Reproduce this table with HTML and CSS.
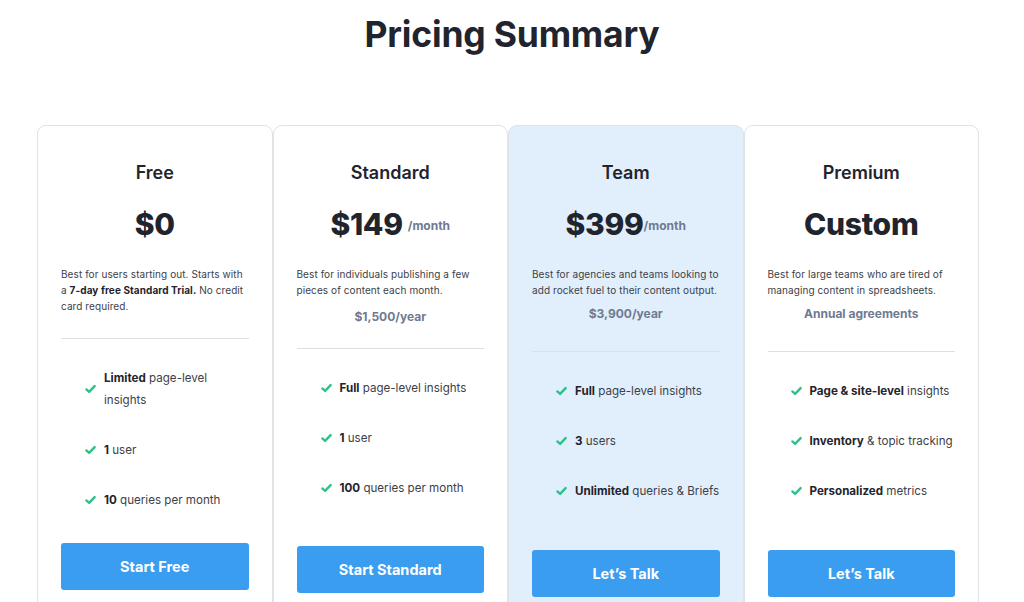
FILE: index.html
```html
<!DOCTYPE html>
<html lang="en">
<head>
<meta charset="utf-8">
<title>Pricing Summary</title>
<link rel="stylesheet" href="styles.css">
</head>
<body>
<main class="page">
  <h1 class="title">Pricing Summary</h1>
  <section class="plans">
    <article class="card card--free">
      <h2 class="plan-name">Free</h2>
      <div class="price"><span class="amount">$0</span></div>
      <p class="desc">Best for users starting out. Starts with a <b>7-day free Standard Trial.</b> No credit card required.</p>
      <hr class="divider">
      <ul class="features">
        <li><svg class="check" viewBox="0 0 12 10"><path d="M1.5 5.5 L4.5 8.2 L10.5 1.8"/></svg><span><b>Limited</b> page-level insights</span></li>
        <li><svg class="check" viewBox="0 0 12 10"><path d="M1.5 5.5 L4.5 8.2 L10.5 1.8"/></svg><span><b>1</b> user</span></li>
        <li><svg class="check" viewBox="0 0 12 10"><path d="M1.5 5.5 L4.5 8.2 L10.5 1.8"/></svg><span><b>10</b> queries per month</span></li>
      </ul>
      <a class="btn" href="#">Start Free</a>
    </article>
    <article class="card card--standard">
      <h2 class="plan-name">Standard</h2>
      <div class="price"><span class="amount">$149</span><span class="per per--spaced">/month</span></div>
      <p class="desc">Best for individuals publishing a few pieces of content each month.</p>
      <p class="yearly">$1,500/year</p>
      <hr class="divider">
      <ul class="features">
        <li><svg class="check" viewBox="0 0 12 10"><path d="M1.5 5.5 L4.5 8.2 L10.5 1.8"/></svg><span><b>Full</b> page-level insights</span></li>
        <li><svg class="check" viewBox="0 0 12 10"><path d="M1.5 5.5 L4.5 8.2 L10.5 1.8"/></svg><span><b>1</b> user</span></li>
        <li><svg class="check" viewBox="0 0 12 10"><path d="M1.5 5.5 L4.5 8.2 L10.5 1.8"/></svg><span><b>100</b> queries per month</span></li>
      </ul>
      <a class="btn" href="#">Start Standard</a>
    </article>
    <article class="card card--team">
      <h2 class="plan-name">Team</h2>
      <div class="price"><span class="amount">$399</span><span class="per">/month</span></div>
      <p class="desc">Best for agencies and teams looking to add rocket fuel to their content output.</p>
      <p class="yearly">$3,900/year</p>
      <hr class="divider">
      <ul class="features">
        <li><svg class="check" viewBox="0 0 12 10"><path d="M1.5 5.5 L4.5 8.2 L10.5 1.8"/></svg><span><b>Full</b> page-level insights</span></li>
        <li><svg class="check" viewBox="0 0 12 10"><path d="M1.5 5.5 L4.5 8.2 L10.5 1.8"/></svg><span><b>3</b> users</span></li>
        <li><svg class="check" viewBox="0 0 12 10"><path d="M1.5 5.5 L4.5 8.2 L10.5 1.8"/></svg><span><b>Unlimited</b> queries &amp; Briefs</span></li>
      </ul>
      <a class="btn" href="#">Let’s Talk</a>
    </article>
    <article class="card card--premium">
      <h2 class="plan-name">Premium</h2>
      <div class="price"><span class="amount">Custom</span></div>
      <p class="desc">Best for large teams who are tired of managing content in spreadsheets.</p>
      <p class="yearly">Annual agreements</p>
      <hr class="divider">
      <ul class="features">
        <li><svg class="check" viewBox="0 0 12 10"><path d="M1.5 5.5 L4.5 8.2 L10.5 1.8"/></svg><span><b>Page &amp; site-level</b> insights</span></li>
        <li><svg class="check" viewBox="0 0 12 10"><path d="M1.5 5.5 L4.5 8.2 L10.5 1.8"/></svg><span><b>Inventory</b> &amp; topic tracking</span></li>
        <li><svg class="check" viewBox="0 0 12 10"><path d="M1.5 5.5 L4.5 8.2 L10.5 1.8"/></svg><span><b>Personalized</b> metrics</span></li>
      </ul>
      <a class="btn" href="#">Let’s Talk</a>
    </article>
  </section>
</main>
</body>
</html>
```
FILE: styles.css
```css
* { box-sizing: border-box; }
html, body { margin: 0; padding: 0; background: #ffffff; }
body {
  font-family: Inter, "Liberation Sans", sans-serif;
  color: #1f242d;
  overflow: hidden;
  height: 602px;
}
.page { padding-top: 14px; }
.title {
  margin: 0;
  text-align: center;
  font-size: 35.5px;
  line-height: 42px;
  font-weight: 700;
  letter-spacing: -0.2px;
  color: #1f242d;
}
.plans {
  display: grid;
  grid-template-columns: repeat(4, 235.5px);
  margin: 69px 0 0 37px;
}
.card {
  border: 1px solid #dfe3e8;
  border-radius: 9px;
  background: #fff;
  padding: 35px 23px 40px;
  height: 520px;
  display: flex;
  flex-direction: column;
}
.card--team { background: #e1effd; }
.plan-name {
  margin: 0;
  text-align: center;
  font-size: 18px;
  line-height: 24px;
  font-weight: 600;
}
.price {
  margin-top: 19px;
  display: flex;
  justify-content: center;
  align-items: center;
  height: 40px;
}
.amount {
  font-size: 30px;
  font-weight: 800;
  letter-spacing: -0.3px;
}
.per {
  font-size: 12px;
  font-weight: 700;
  color: #6f7a90;
  margin-top: 2px;
}
.per--spaced { margin-left: 5px; }
.desc {
  margin: 22px 0 0;
  font-size: 10px;
  letter-spacing: 0.08px;
  line-height: 16px;
  color: #3c4149;
}
.desc b { color: #1f242d; }
.yearly {
  margin: 10px 0 0;
  text-align: center;
  font-size: 12px;
  line-height: 18px;
  font-weight: 700;
  color: #6f7a90;
}
.card--team .yearly, .card--premium .yearly { margin-top: 7px; }
.divider {
  margin: 23px 0 0;
  border: 0;
  border-top: 1px solid #dcdfe3;
  height: 0;
}
.card--free .divider { margin-top: 24px; }
.card--standard .divider { margin-top: 22px; }
.card--team .divider, .card--premium .divider { margin-top: 28px; }
.features {
  list-style: none;
  margin: 28px 0 0;
  padding: 0 0 0 24px;
  display: flex;
  flex-direction: column;
  gap: 28px;
}
.features li {
  display: flex;
  align-items: center;
  gap: 8px;
  font-size: 11.6px;
  line-height: 22px;
  color: #3c4149;
}
.features li b { color: #1f242d; font-weight: 700; }
.card--free .features li:first-child span { width: 110px; }
.card--premium .features { padding-left: 23px; }
.check {
  width: 11px;
  height: 10px;
  flex: none;
  fill: none;
  stroke: #2fc286;
  stroke-width: 2.6;
  stroke-linecap: round;
  stroke-linejoin: round;
}
.btn {
  display: flex;
  align-items: center;
  justify-content: center;
  height: 47px;
  border-radius: 3px;
  background: #3a9df0;
  color: #fff;
  font-size: 14.5px;
  font-weight: 700;
  text-decoration: none;
  margin-top: 32px;
}
.card--standard .btn { margin-top: 47px; }
.card--team .btn, .card--premium .btn { margin-top: 48px; }
```
